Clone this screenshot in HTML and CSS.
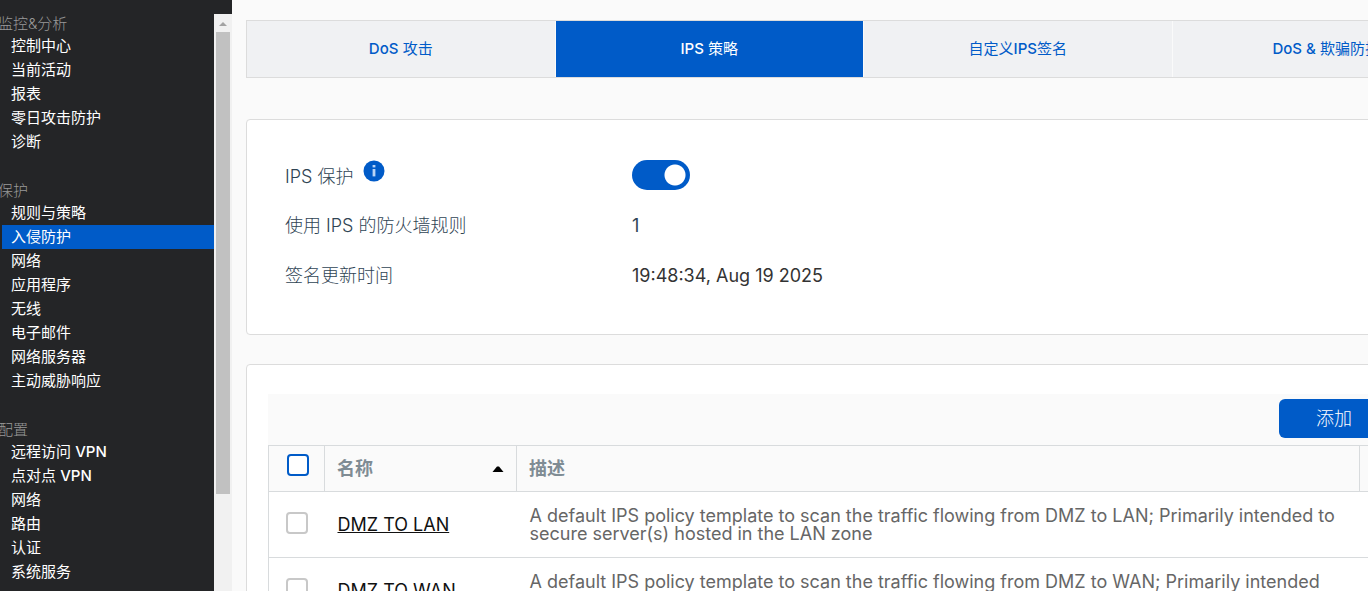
FILE: index.html
```html
<!DOCTYPE html>
<html lang="zh-CN">
<head>
  <meta charset="UTF-8" />
  <meta name="viewport" content="width=device-width, initial-scale=1.0" />
  <title>入侵防护</title>
  <link rel="stylesheet" href="styles.css">
</head>
<body>
  <aside class="sidebar">
    <nav class="menu">
      <section class="menu-group">
        <h2>监控&amp;分析</h2>
        <ul>
          <li><a href="#">控制中心</a></li>
          <li><a href="#">当前活动</a></li>
          <li><a href="#">报表</a></li>
          <li><a href="#">零日攻击防护</a></li>
          <li><a href="#">诊断</a></li>
        </ul>
      </section>
      <section class="menu-group">
        <h2>保护</h2>
        <ul>
          <li><a href="#">规则与策略</a></li>
          <li><a href="#" class="active">入侵防护</a></li>
          <li><a href="#">网络</a></li>
          <li><a href="#">应用程序</a></li>
          <li><a href="#">无线</a></li>
          <li><a href="#">电子邮件</a></li>
          <li><a href="#">网络服务器</a></li>
          <li><a href="#">主动威胁响应</a></li>
        </ul>
      </section>
      <section class="menu-group">
        <h2>配置</h2>
        <ul>
          <li><a href="#">远程访问 <span class="latin">VPN</span></a></li>
          <li><a href="#">点对点 <span class="latin">VPN</span></a></li>
          <li><a href="#">网络</a></li>
          <li><a href="#">路由</a></li>
          <li><a href="#">认证</a></li>
          <li><a href="#">系统服务</a></li>
        </ul>
      </section>
    </nav>
    <div class="scrollbar">
      <svg class="scroll-up" viewBox="0 0 18 18" width="18" height="18" aria-hidden="true">
        <path d="M5 12 L9 8 L13 12 Z" fill="#a3a3a3" />
      </svg>
      <div class="scroll-thumb"></div>
    </div>
  </aside>

  <main class="content">
    <nav class="tabs">
      <a href="#"><span class="latin">DoS</span> 攻击</a>
      <a href="#" class="active"><span class="latin">IPS</span> 策略</a>
      <a href="#">自定义<span class="latin">IPS</span>签名</a>
      <a href="#"><span class="latin">DoS &amp;</span> 欺骗防护</a>
    </nav>

    <section class="panel status">
      <div class="status-row">
        <label for="ipsToggle">IPS 保护
          <svg class="info" viewBox="0 0 22 22" width="22" height="22" aria-hidden="true">
            <circle cx="11" cy="11" r="10.5" fill="#005bc8" />
            <rect x="9.6" y="5" width="2.8" height="2.4" fill="#b9d4f5" />
            <rect x="9.6" y="9" width="2.8" height="7.4" fill="#b9d4f5" />
          </svg>
        </label>
        <input type="checkbox" id="ipsToggle" class="toggle" checked />
      </div>
      <div class="status-row">
        <span class="name">使用 IPS 的防火墙规则</span>
        <span>1</span>
      </div>
      <div class="status-row">
        <span class="name">签名更新时间</span>
        <span class="time">19:48:34, Aug 19 2025</span>
      </div>
    </section>

    <section class="panel policies">
      <div class="toolbar">
        <button type="button">添加</button>
      </div>
      <table>
        <thead>
          <tr>
            <th class="col-check"><input type="checkbox" class="check check-all" aria-label="全选" /></th>
            <th class="col-name">
              <div class="sortable">名称
                <svg viewBox="0 0 12 6" width="12" height="6" aria-hidden="true">
                  <path d="M0.5 6 L5 0.5 H7 L11.5 6 Z" fill="#000" />
                </svg>
              </div>
            </th>
            <th class="col-desc">描述</th>
            <th></th>
          </tr>
        </thead>
        <tbody>
          <tr>
            <td><input type="checkbox" class="check" aria-label="DMZ TO LAN" /></td>
            <td><a href="#">DMZ TO LAN</a></td>
            <td class="desc">A default IPS policy template to scan the traffic flowing from DMZ to LAN; Primarily intended to secure server(s) hosted in the LAN zone</td>
            <td></td>
          </tr>
          <tr>
            <td><input type="checkbox" class="check" aria-label="DMZ TO WAN" /></td>
            <td><a href="#">DMZ TO WAN</a></td>
            <td class="desc">A default IPS policy template to scan the traffic flowing from DMZ to WAN; Primarily intended to secure server(s) hosted in the DMZ zone</td>
            <td></td>
          </tr>
        </tbody>
      </table>
    </section>
  </main>
</body>
</html>
```
FILE: styles.css
```css
* {
  box-sizing: border-box;
  margin: 0;
  padding: 0;
}

body {
  display: flex;
  height: 100vh;
  overflow: hidden;
  background: #fafafa;
  color: #2f4454;
  font-family: Inter, "Noto Sans CJK SC", sans-serif;
  font-size: 18px;
}

a {
  color: inherit;
  text-decoration: none;
}

.latin {
  font-weight: 500;
}

/* sidebar */
.sidebar {
  display: flex;
  flex: none;
  width: 232px;
  padding-top: 14px;
  background: #242527;
}

.menu {
  flex: 1;
  overflow: hidden;
}

.menu-group {
  margin-bottom: 27px;
}

.menu-group h2 {
  height: 20px;
  text-indent: -2px;
  color: #999;
  font-size: 15px;
  font-weight: 300;
  line-height: 20px;
}

.menu-group ul {
  list-style: none;
}

.menu-group a {
  display: block;
  height: 24px;
  margin-left: 2px;
  padding-left: 9px;
  color: #fff;
  font-size: 15px;
  line-height: 24px;
}

.menu-group a.active {
  background: #005bc8;
}

.scrollbar {
  width: 18px;
  padding: 0 2px;
  background: #f1f1f1;
}

.scroll-up {
  display: block;
  margin-left: -2px;
}

.scroll-thumb {
  height: 80%;
  background: #c1c1c1;
}

/* main area */
.content {
  flex: 1 0 1264px;
  padding: 20px 14px;
}

.tabs {
  display: flex;
  height: 58px;
  margin-bottom: 41px;
  border: 1px solid #dcdcdc;
  background: #f0f1f3;
}

.tabs a {
  flex: 1;
  border-right: 1px solid #fafafa;
  color: #005bc8;
  font-size: 15px;
  line-height: 56px;
  text-align: center;
}

.tabs a.active {
  background: #005bc8;
  color: #fff;
}

.panel {
  border: 1px solid #dcdcdc;
  border-radius: 4px;
  background: #fff;
}

.status {
  margin-bottom: 29px;
  padding: 30px 38px 34px;
}

.status-row {
  display: flex;
  align-items: center;
  height: 50px;
}

.status-row label,
.status-row .name {
  width: 347px;
  padding-bottom: 2px;
  font-weight: 300;
}

.status-row .time {
  color: #333;
}

.info {
  margin-left: 4px;
  vertical-align: 1px;
}

.toggle {
  width: 58px;
  height: 30px;
  border-radius: 15px;
  background: radial-gradient(circle at 43px 15px, #fff 10px, #005bc8 11px);
  appearance: none;
}

/* policy table */
.policies {
  padding: 29px 21px;
}

.toolbar {
  display: flex;
  justify-content: flex-end;
  padding: 5px 71px 7px 0;
  background: #fafafa;
}

.toolbar button {
  width: 110px;
  height: 39px;
  padding-bottom: 4px;
  border: none;
  border-radius: 6px;
  background: #005bc8;
  color: #fff;
  font: inherit;
  font-weight: 300;
}

table {
  width: 100%;
  border-collapse: collapse;
  table-layout: fixed;
}

tr {
  border: 1px solid #d8dbdd;
}

th {
  height: 46px;
  padding: 0 12px 4px;
  border: 1px solid #d8dbdd;
  background: #fafafa;
  color: #7f8c94;
  font-weight: 700;
  text-align: left;
}

td {
  height: 66px;
  padding: 0 13px;
}

td a {
  color: #111;
  text-decoration: underline;
}

.col-check {
  width: 56px;
}

.col-name {
  width: 192px;
}

.col-desc {
  width: 843px;
}

.sortable {
  display: flex;
  align-items: center;
  justify-content: space-between;
}

.sortable svg {
  margin-top: 4px;
}

.desc {
  padding-right: 19px;
  color: #666;
  line-height: 18px;
}

.check {
  display: block;
  width: 22px;
  height: 22px;
  margin: 0 0 4px 4px;
  border: 2px solid #c8c8c8;
  border-radius: 4px;
  background: #fff;
  appearance: none;
}

.check-all {
  margin-left: 6px;
  border-color: #005bc8;
}
```
